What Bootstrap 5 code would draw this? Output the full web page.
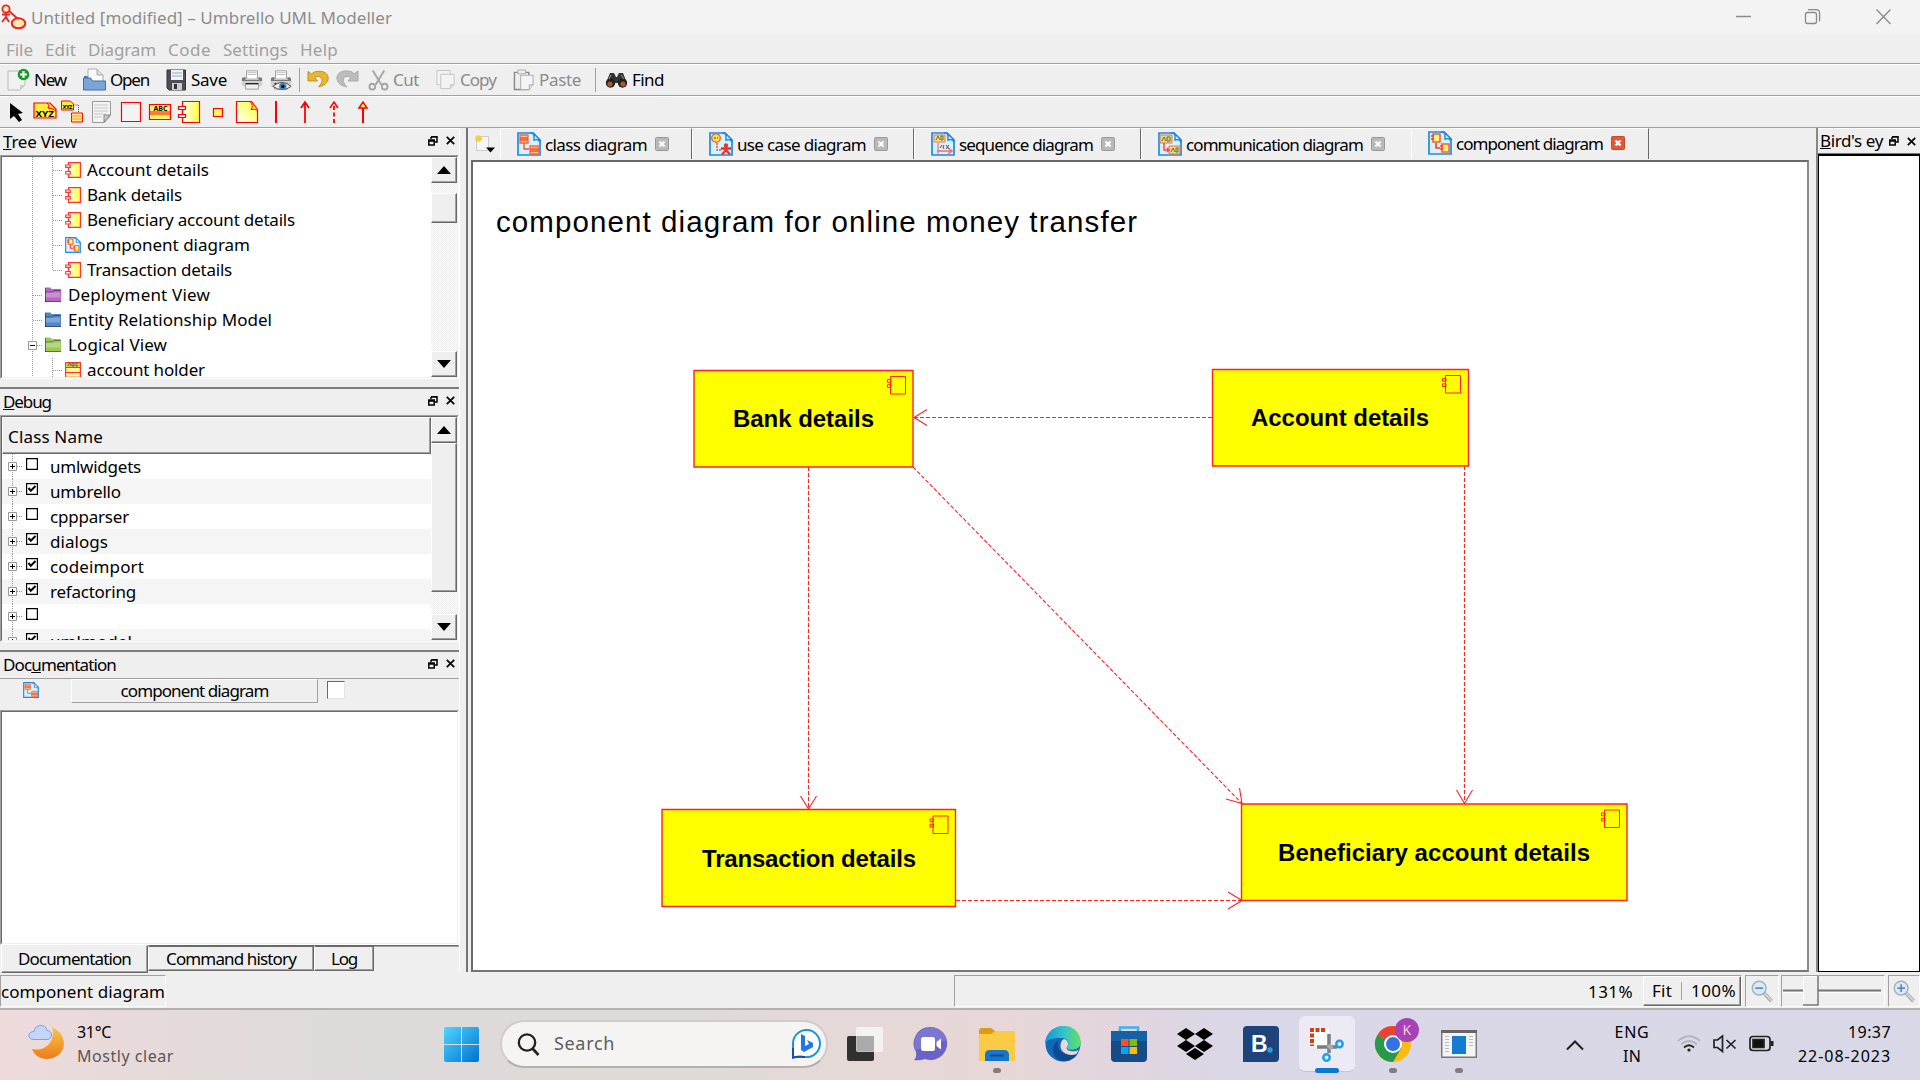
<!DOCTYPE html>
<html lang="en">
<head>
<meta charset="utf-8">
<title>Untitled [modified] – Umbrello UML Modeller</title>
<link href="https://cdn.jsdelivr.net/npm/bootstrap@5.3.0/dist/css/bootstrap.min.css" rel="stylesheet">
<style>
:root{--face:#efefef;--mid:#a0a0a0;--dark:#696969}
body{width:1920px;height:1080px;overflow:hidden;background:var(--face);color:#000;font:17px/24px "Noto Sans","Open Sans",sans-serif}
svg{display:block;flex:none}
.fit{display:inline-block;white-space:nowrap;flex:none}
.titlebar{height:34px;background:#f3f3f3;color:#8c8c8c}
.titlebar .fit{padding-top:1px}
.menus{height:30px;color:#a0a0a0;border-bottom:1px solid var(--mid);padding:2px 0 0 6px}
.menus .fit{margin-right:12px}
.tools{height:32px;border-top:1px solid #fff;border-bottom:1px solid var(--mid)}
.off{color:#8a8a8a}
.vline{width:1px;height:24px;background:var(--mid);flex:none}
.ml5{margin-left:5px}.ml7{margin-left:7px}.ml9{margin-left:9px}.ml14{margin-left:14px}.ml17{margin-left:17px}
.mr5{margin-right:5px}
.newicon{margin:0 4px 0 7px}
.shapes{padding-left:3px}
.shapes svg{margin-right:5px}
.shapes .wide{margin-right:2px}
.workarea{height:844px}
.leftdock{width:460px;border-right:1px solid #fff;border-top:1px solid #fff}
.splitter{width:6px}
.docktitle{height:26px;padding:0 4px 0 3px}
.docktitle .btns{margin-top:-2px}
.sunken{border:1px solid;border-color:var(--mid) #fff #fff var(--mid);width:459px}
.sunken>.inner{border:1px solid;border-color:var(--dark) #efefef #efefef var(--dark);background:#fff;height:100%;overflow:hidden}
.treebox{height:224px}
.treebox .labels{padding-top:1px}
.lvl1{padding-left:1px}.lvl2{margin-left:-18px}
.dockgap{height:10px;border-bottom:2px solid #7d7d7d}
.line25{height:25px;flex:none}
.sbar{width:26px;flex:none;background:repeating-conic-gradient(#fff 0 25%,#ececec 0 50%) 0 0/2px 2px}
.raised{background:var(--face);border:1px solid;border-color:#fff var(--dark) var(--dark) #fff;box-shadow:inset -1px -1px var(--mid);flex:none}
.sq{height:26px;display:flex;align-items:center;justify-content:center}
.thumb1{height:30px;margin-top:10px}
.thumb2{height:149px}
.debugbox{height:227px}
.colhead{height:37px;padding:2px 0 0 5px}
.odd{background:#f5f5f5}
.classname{padding-top:1px}
.docrow{height:32px;border-top:1px solid var(--mid)}
.docicon{margin:3px 0 0 23px}
.namebtn{width:247px;height:24px;border:1px solid;border-color:#fff var(--mid) var(--mid) #fff;margin-left:32px}
.tickbox{width:18px;height:18px;background:#fff;border:1px solid;border-color:var(--dark) #e3e3e3 #e3e3e3 var(--dark);margin:2px 0 0 9px}
.docbox{height:235px}
.doctabs{height:28px;padding-left:1px}
.doctabs .dt{border:1px solid;border-color:transparent var(--dark) var(--dark) #fff;box-shadow:inset -1px -1px var(--mid);display:flex;justify-content:center;align-items:center;flex:none}
.doctabs .one{width:147px;height:28px}
.doctabs .two{width:166px;height:26px;border-top:2px solid var(--dark)}
.doctabs .three{width:60px;height:26px;border-top:2px solid var(--dark)}
.doctabs .rest{flex:1;height:2px;background:var(--dark);border:0}
.center{width:1346px;border-left:2px solid #747474}
.tabstrip{height:32px}
.dtab{height:31px;border-left:1px solid #fff;border-top:1px solid #fff;border-right:1px solid var(--dark);flex:none;padding-left:16px;display:flex;align-items:center}
.dtab .fit{margin:1px 8px 0 4px}
.newtab{width:32px}
.t1{width:192px}.t2{width:222px}.t3{width:227px}.t4{width:270px;border-right:0}.t5{width:238px;padding-bottom:2px}
.frame{height:812px;width:1338px;border:2px solid;border-color:var(--dark) #8b8b8b #777 var(--dark);background:#fff;margin-left:3px}
.rightdock{width:104px;border-left:2px solid #888}
.birdtitle{height:26px;border-top:1px solid #fff;border-bottom:1px solid #777;padding-left:2px}
.birdbox{height:818px;background:#fff;border:1px solid #000;border-top:2px solid #000}
.statusbar{height:36px;padding-top:3px}
.cell{height:32px;border:1px solid;border-color:var(--mid) #fff #fff var(--mid);flex:none;display:flex;align-items:center}
.cell>.fit{padding-top:1px}
.zoomcell{width:788px}
.zoomset{width:98px;height:30px;margin-left:10px;padding-left:8px}
.mini{height:18px;margin:0 9px}
.mg{width:34px;margin-left:3px}.mglast{width:32px}.sl{width:104px;margin-left:2px}
.taskbar{height:72px;border-top:2px solid #b4b0b0;font-size:16px;background:linear-gradient(90deg,#efdada,#e4dada 10%,#dddada 20%,#dddad7 36%,#e4d9d8 42%,#e7d7d6 52%,#e2d5df 58%,#dad7e7 65%,#d8d8e6)}
.taskbar .fit{position:relative;top:-1px}
.soft{color:#5a5556}.search{font-size:18px;color:#5e5c5c}
.weather{width:367px}
.startlogo{margin-top:-1px}
.pill{width:328px;height:48px;border-radius:24px;background:#f5f4f3;border:2px solid #d2cbcb;border-bottom-color:#b5afae;margin:-2px 0 0 21px}
.apps{margin-left:4px}
.app{width:66px;height:70px;flex:none;position:relative;display:flex;align-items:center;justify-content:center;padding-bottom:2px}
.app.live::after{content:"";position:absolute;bottom:7px;width:8px;height:5px;border-radius:3px;background:#837b7e}
.app.focus::before{content:"";position:absolute;left:5px;top:6px;width:56px;height:56px;border-radius:6px;background:#eceaf5;border-bottom:1px solid #c5c3d0}
.app.focus::after{content:"";position:absolute;bottom:7px;width:24px;height:5px;border-radius:3px;background:#0a78d4}
.app svg{position:relative}
.chev{margin-left:74px}.lang{width:36px;margin-left:30px}.tray{margin-left:26px}.clock{width:93px;margin-left:22px}
</style>
<script src="https://cdn.jsdelivr.net/npm/bootstrap@5.3.0/dist/js/bootstrap.bundle.min.js"></script>
</head>
<body class="d-flex flex-column">
<svg width="0" height="0" class="position-absolute">
<defs>
<linearGradient id="gy" x1="0" y1="1" x2="1" y2="0"><stop offset="0" stop-color="#fff"/><stop offset="1" stop-color="#ff3"/></linearGradient>
<linearGradient id="gx"><stop offset="0" stop-color="#fffef0"/><stop offset="1" stop-color="#ffff3a"/></linearGradient>
<linearGradient id="win" x1="0" y1="0" x2="1" y2="1"><stop offset="0" stop-color="#4fd5ff"/><stop offset="1" stop-color="#0072d0"/></linearGradient>
<linearGradient id="moon" x1="0" y1="0" x2="0" y2="1"><stop offset="0" stop-color="#f5c84a"/><stop offset="1" stop-color="#ef7a1a"/></linearGradient>
<linearGradient id="edgeA"><stop offset="0" stop-color="#1296d8"/><stop offset=".55" stop-color="#35c5c7"/><stop offset="1" stop-color="#64e05a"/></linearGradient>
<symbol id="float" viewBox="0 0 10 10"><path d="M3 0.5h6v5.5H7M3 1v2M3 1h6M.8 4h5.4v5H.8zM.8 5h5.4" fill="none" stroke="#000" stroke-width="1.5"/></symbol>
<symbol id="shut" viewBox="0 0 9 9"><path d="M.8.8l7.4 7.4M8.2.8L.8 8.2" stroke="#000" stroke-width="1.7"/></symbol>
<symbol id="up" viewBox="0 0 14 8"><path d="M0 8L7 0l7 8z"/></symbol>
<symbol id="down" viewBox="0 0 14 8"><path d="M0 0h14L7 8z"/></symbol>
<symbol id="comp" viewBox="0 0 16 16"><path d="M3.500.600h12v14.800h-12z" fill="url(#gx)" stroke="#f33" stroke-width="1.200"/><path d="M.7 3h4.600v2.400H.7zM.7 9.500h4.600V12H.7zM3.500 5.500v4" fill="#fff" stroke="#f33" stroke-width="1.100"/></symbol>
<symbol id="page" viewBox="0 0 24 24"><path d="M1 1h15l7 7v15H1z" fill="#d9f1ff" stroke="#1b8ce8" stroke-width="1.700"/><path d="M13 1c5 0 4 3 4 7 3-1 5 0 6 2V8l-7-7z" fill="#fff" stroke="#1b8ce8" stroke-width="1.500"/></symbol>
<symbol id="pcomp" viewBox="0 0 24 24"><use href="#page"/><path d="M5 3h7v8H5zM14 13h7v8h-7z" fill="#fff47c" stroke="#fb5a2d" stroke-width="1.500"/><path d="M3 5h3M3 8h3M12 15h3M12 18h3M8 12v5h4" stroke="#fb3a2d" stroke-width="1.600" fill="none"/></symbol>
<symbol id="pclass" viewBox="0 0 24 24"><use href="#page"/><path d="M3 3h8v8H3zM13 14h9v8h-9z" fill="#ffc68b" stroke="#f46b3d" stroke-width="1.300"/><path d="M3 6h8M3 8h8M13 17h9M13 19h9M7 11v6h5" stroke="#f4502d" stroke-width="1.300" fill="none"/></symbol>
<symbol id="puse" viewBox="0 0 24 24"><use href="#page"/><circle cx="7" cy="6" r="4.300" fill="#ffe25a" stroke="#ee6a36" stroke-width="1.500"/><path d="M5 6h4M8 11v7h4" stroke="#c54" stroke-width="1.400" stroke-dasharray="2 1" fill="none"/><circle cx="17" cy="13.500" r="2.200" fill="#e33"/><path d="M12 16.500h10M17 14v4l-4 4.500M17 18l4 4.500" stroke="#ef2e2e" stroke-width="2.400" fill="none"/></symbol>
<symbol id="pseq" viewBox="0 0 24 24"><use href="#page"/><path d="M3 3h11v7H3z" fill="#eee37e" stroke="#f47146"/><path d="M5 8l2-4 2 4M10 4h2v4h-2z" stroke="#666a40" fill="none"/><path d="M7 11v11" stroke="#f55"/><path d="M6 19h15M17 16l4 3-4 3" stroke="#f66" stroke-width="1.500" fill="none"/><path d="M9 16l2-3M13 13q-2 2 0 4M15 13l3 4M18 13l-3 4" stroke="#555" fill="none"/></symbol>
<symbol id="pcom" viewBox="0 0 24 24"><use href="#page"/><path d="M2 3h12v8H2zM11 14h11v8H11z" fill="#e4da79" stroke="#f47146"/><path d="M4 9l2-4 2 4M9 5h3v4H9zM13 20l2-4 2 4M18 16h2v4h-2z" stroke="#6a6d45" fill="none"/><path d="M6 11v7h5M9 16l2 2-2 2" stroke="#f44" stroke-width="1.500" fill="none"/></symbol>
<symbol id="folder" viewBox="0 0 16 16"><path d="M0 15V.500h5.500l1 1.500H16v13z"/><path d="M.5 5h7l1.500-1.500h6.500M0 14.500h16M.5 15V1" stroke="#0006" fill="none"/><path d="M1 5.500h14v5H1z" fill="#fff4"/></symbol>
<symbol id="cls" viewBox="0 0 16 16"><path d="M.6.600h14.800v14.800H.6z" fill="#fff799" stroke="#f33" stroke-width="1.200"/><path d="M1 1h14v4H1z" fill="#d5ca43"/><path d="M0 5.500h16M0 10.500h16" stroke="#f33"/><path d="M3 4l1.500-3L6 4M7 1v3h2V1zM13 1h-2v3h2" stroke="#664" fill="none"/></symbol>
<symbol id="plus" viewBox="0 0 9 9"><path d="M.5.500h8v8h-8z" fill="#fff" stroke="#999"/><path d="M2 4.500h5M4.500 2v5" stroke="#000"/></symbol>
<symbol id="minus" viewBox="0 0 9 9"><path d="M.5.500h8v8h-8z" fill="#fff" stroke="#999"/><path d="M2 4.500h5" stroke="#000"/></symbol>
<symbol id="chk0" viewBox="0 0 12 12"><path d="M.6.600h10.800v10.800H.6z" fill="#fff" stroke="#000" stroke-width="1.200"/></symbol>
<symbol id="chk1" viewBox="0 0 12 12"><use href="#chk0"/><path d="M2.500 5l2.300 2.700L9.500 3" fill="none" stroke="#000" stroke-width="2"/></symbol>
<symbol id="xg" viewBox="0 0 14 14"><rect x=".5" y=".5" width="13" height="13" rx="1" fill="#b9b9b9" stroke="#999"/><path d="M4.500 4.500l5 5M9.500 4.500l-5 5" stroke="#fff" stroke-width="2.300"/></symbol>
<symbol id="xr" viewBox="0 0 14 14"><rect x=".5" y=".5" width="13" height="13" rx="1" fill="#e2583b" stroke="#c9492f"/><path d="M4.500 4.500l5 5M9.500 4.500l-5 5" stroke="#fff" stroke-width="2.300"/></symbol>
<symbol id="printer" viewBox="0 0 24 24"><path d="M6 2h12v9H6z" fill="#fff" stroke="#999"/><path d="M7 4h10M7 6h10" stroke="#bbb"/><path d="M1 11q0-2 2-2h2v3h14V9h2q2 0 2 2v4H1z" fill="#777"/><path d="M1 13h22v5q0 1-1 1H2q-1 0-1-1z" fill="#d0d0d0"/><path d="M5 16h14v6H5z" fill="#eee" stroke="#999"/><path d="M5 16h14" stroke="#222" stroke-width="1.500"/></symbol>
<symbol id="mag" viewBox="0 0 24 24"><path d="M13 13l8.500 9" stroke="#aaa" stroke-width="4"/><path d="M14 14l8 8" stroke="#d6d6d6" stroke-width="2"/><circle cx="8.500" cy="8.500" r="7.200" fill="#d7e9fb" stroke="#a9afb8" stroke-width="1.600"/><path d="M4.500 8.500h8" stroke="#5a86b8" stroke-width="1.700"/></symbol>
</defs></svg>

<header class="titlebar d-flex align-items-center">
 <svg width="27" height="34" viewBox="0 0 27 34"><g fill="#ffe9b0" stroke="#ee2222" stroke-width="1.800"><circle cx="6" cy="9" r="3.600"/><path d="M6 12.500v5M2 14.500h8M6 17l-4 5M6 17l3 5M9 11l9 8" fill="none"/><ellipse cx="18.500" cy="23.300" rx="6.800" ry="5" stroke-width="2"/></g></svg>
 <span class="fit ms-1" data-w="361">Untitled [modified] – Umbrello UML Modeller</span>
 <svg class="ms-auto" width="184" height="34" viewBox="1736 0 184 34" fill="none" stroke="#8a8a8a" stroke-width="1.300"><path d="M1736 16.500h15M1876.500 9.500l14 14.500M1890.500 9.500l-14 14.500"/><rect x="1805.500" y="12.500" width="11" height="11" rx="2"/><path d="M1808 9.700h8q3.600 0 3.600 3.600v8"/></svg>
</header>
<nav class="menus d-flex align-items-center">
 <span class="fit" data-w="27">File</span><span class="fit" data-w="31">Edit</span><span class="fit" data-w="68">Diagram</span><span class="fit" data-w="43">Code</span><span class="fit" data-w="65">Settings</span><span class="fit" data-w="38">Help</span>
</nav>
<div class="tools d-flex align-items-center">
 <svg class="newicon" width="23" height="24" viewBox="0 0 23 24"><path d="M1 3h17v14l-5 5H1z" fill="#f1f1f1" stroke="#b9b9b9"/><path d="M18 17h-5v5z" fill="#ccc"/><circle cx="16.500" cy="6.500" r="5.800" fill="#159a28"/><path d="M16.500 3v7M13 6.500h7" stroke="#fff" stroke-width="2.200"/></svg>
 <span class="fit" data-w="32">New</span>
 <svg class="ml17 me-1" width="23" height="24" viewBox="0 0 23 24"><path d="M1 11V8h8v3" fill="#4a7cb8"/><path d="M5 1h9l6 6v10H5z" fill="#fafafa" stroke="#aaa"/><path d="M14 1v6h6" fill="#ddd" stroke="#aaa"/><path d="M.5 22V10h7l2 3h13v9z" fill="#7ba4d8" stroke="#3c6fae"/></svg>
 <span class="fit" data-w="39">Open</span>
 <svg class="ml17 me-1" width="21" height="24" viewBox="0 0 21 24"><path d="M1 2h18.500v20H3l-2-2z" fill="#4d4d57" stroke="#333"/><path d="M5 2h12v10H5z" fill="#eef3fa"/><path d="M6 5h10M6 8h10" stroke="#9ab"/><path d="M6 15h10v7H6z" fill="#ccc"/><path d="M8 16h3v5H8z" fill="#333"/></svg>
 <span class="fit" data-w="36">Save</span>
 <svg class="ml14" width="22" height="24"><use href="#printer"/></svg>
 <svg class="ml7" width="22" height="24" viewBox="0 0 24 24"><use href="#printer"/><path d="M3 19q10-9 20 0-9 7-20 0z" fill="#eee" stroke="#444"/><circle cx="14" cy="19" r="4" fill="#3b84b5"/><circle cx="14" cy="19" r="1.700"/></svg>
 <span class="vline ml7"></span>
 <svg class="ml7" width="23" height="24" viewBox="0 0 24 24"><path d="M1 3v10h10L8 9.500c7-4 11 3 4 9.500 14-2 13-17 0-16-4 0-6 1-7 3z" fill="#eab62e" stroke="#c38f12"/></svg>
 <svg class="ml5" width="24" height="24" viewBox="0 0 24 24"><path d="M23 3v10H13l3-3.500c-7-4-11 3-4 9.500-14-2-13-17 0-16 4 0 6 1 7 3z" fill="#bcbcbc" stroke="#aaa"/></svg>
 <svg class="ml9 me-1" width="21" height="24" viewBox="0 0 22 24" fill="none" stroke="#a5a5a5"><path d="M5 2l9 15M17 2L8 17" stroke-width="2"/><circle cx="4.500" cy="19" r="3" stroke-width="2"/><circle cx="17.500" cy="19" r="3" stroke-width="2"/></svg>
 <span class="fit off" data-w="26">Cut</span>
 <svg class="ml17 me-1" width="20" height="24" viewBox="0 0 21 24" fill="#f3f3f3" stroke="#c3c3c3"><path d="M1 2h14v15H1z"/><path d="M5 6h14v11l-4 4H5z"/><path d="M19 17h-4v4" fill="#ddd"/></svg>
 <span class="fit off" data-w="36">Copy</span>
 <svg class="ml17 me-1" width="22" height="24" viewBox="0 0 23 24" fill="#eee" stroke="#aaa"><path d="M1.500 4h15v18h-15z" stroke="#888" stroke-width="1.500"/><path d="M5 1.500h8v4H5z"/><path d="M8 7h13v10l-4 5H8z" fill="#f4f4f4"/><path d="M21 17h-4v5" fill="#ddd"/></svg>
 <span class="fit off" data-w="42">Paste</span>
 <span class="vline ml14"></span>
 <svg class="ml9 me-1" width="23" height="24" viewBox="0 0 23 24"><path d="M5 5l4 0 2 4h1l2-4h4l4 10H1z" fill="#333"/><circle cx="5.500" cy="15" r="4.700" fill="#222"/><circle cx="17.500" cy="15" r="4.700" fill="#222"/><circle cx="5" cy="16" r="2.600" fill="#a65a2a"/><circle cx="18" cy="16" r="2.600" fill="#a65a2a"/><path d="M6 7l-2 4M16 7l3 4" stroke="#999"/></svg>
 <span class="fit" data-w="32">Find</span>
</div>
<div class="tools shapes d-flex align-items-center">
 <svg width="24" height="24" viewBox="4 0 24 24"><path d="M9 2v16l4-3 5 6 3-2-4-6 5-1z" transform="translate(2,1)"/></svg>
 <svg class="wide" width="26" height="24" viewBox="-1 0 26 24"><path d="M1 3h16l6 6v9H1z" fill="#ffef3b" stroke="#f00" stroke-width="1.200"/><path d="M14 3q3 2 1 5 5 0 8 3" fill="#ffef3b" stroke="#f00"/><text x="2.500" y="17" font-size="9" font-weight="700" textLength="18.500" lengthAdjust="spacingAndGlyphs">XYZ</text></svg>
 <svg width="25" height="24" viewBox="0 0 24 24"><path d="M1 1h9l3 3v6H1z" fill="#ffef3b" stroke="#f00"/><text x="2" y="9" font-size="6" font-weight="700" textLength="10">XYZ</text><path d="M14 5h4v7" stroke="#f00" stroke-dasharray="1 1" fill="none"/><path d="M11 13h11v9H11z" fill="#fff27a" stroke="#f00"/><path d="M11 16h11M11 19h11" stroke="#f85"/></svg>
 <svg width="24" height="24" viewBox="0 0 24 24"><path d="M2.500 1.500h18v14l-6 7h-12z" fill="#f3f3f3" stroke="#999"/><path d="M4 5h14M4 8h14M4 11h14M4 14h12M4 17h8" stroke="#bbb" stroke-width=".8"/><path d="M20 15h-6v7z" fill="#ccc" stroke="#888"/></svg>
 <svg width="24" height="24"><path d="M2.500 2.500h19v19h-19z" fill="#f3f3f3" stroke="#f00" stroke-width="1.200"/></svg>
 <svg width="24" height="24"><path d="M1.500 4.500h21v15h-21z" fill="#fff56b" stroke="#f00" stroke-width="1.200"/><path d="M1.500 12h21M1.500 14h21" stroke="#f00"/><text x="5.500" y="11" font-size="7" font-weight="700" textLength="14" lengthAdjust="spacingAndGlyphs">ABC</text></svg>
 <svg width="24" height="24"><path d="M5.500 1.500h17v21h-17z" fill="url(#gx)" stroke="#f00" stroke-width="1.200"/><path d="M1.500 6.500h7v3h-7zM1.500 14.500h7v3h-7zM5.500 9v5" fill="#fff" stroke="#f00" stroke-width="1.200"/></svg>
 <svg width="24" height="24"><path d="M7.500 8.500h9v8h-9z" fill="#ff5" stroke="#f00" stroke-width="1.200"/></svg>
 <svg width="24" height="24"><path d="M1.500 1.500h15l6 8v13h-21z" fill="url(#gy)" stroke="#f00" stroke-width="1.200"/><path d="M15 1.500q4 4 1 8 4-1 7 1" fill="#ffef3b" stroke="#f00"/></svg>
 <svg width="24" height="24"><path d="M12 1v22" stroke="#f00" stroke-width="2"/></svg>
 <svg width="24" height="24"><path d="M12 2v21M8 8l4-6 4 6" stroke="#f00" stroke-width="1.800" fill="none"/></svg>
 <svg width="24" height="24"><path d="M12 23V3" stroke="#f00" stroke-width="1.800" stroke-dasharray="4 2.500"/><path d="M8 8l4-6 4 6" stroke="#f00" stroke-width="1.500" fill="none"/></svg>
 <svg width="24" height="24"><path d="M12 23V8" stroke="#f00" stroke-width="2"/><path d="M8 8l4-6 4 6z" stroke="#f00" stroke-width="1.500" fill="#ff5"/></svg>
</div>

<main class="workarea d-flex">
 <aside class="leftdock flex-shrink-0">
  <div class="docktitle d-flex align-items-center justify-content-between"><span class="fit" data-w="74"><u>T</u>ree View</span><span class="btns d-flex gap-2"><svg width="10" height="10"><use href="#float"/></svg><svg width="9" height="9"><use href="#shut"/></svg></span></div>
  <div class="sunken treebox"><div class="inner d-flex">
   <svg width="84" height="220" viewBox="2 156 84 220"><g stroke="#999" stroke-dasharray="1 1" fill="none"><path d="M32.500 156v221M52.500 156v113M53 169.500h9M53 194.500h9M53 219.500h9M53 244.500h9M53 269.500h9M33 294.500h9M33 319.500h9M33 344.500h9M52.500 357v20M53 369.500h9"/></g>
    <g><use href="#comp" x="65" y="161" width="16" height="16"/><use href="#comp" x="65" y="186" width="16" height="16"/><use href="#comp" x="65" y="211" width="16" height="16"/><use href="#pcomp" x="65" y="236" width="16" height="16"/><use href="#comp" x="65" y="261" width="16" height="16"/><use href="#folder" x="45" y="286" width="16" height="16" fill="#b768c4"/><use href="#folder" x="45" y="311" width="16" height="16" fill="#4f87c8"/><use href="#folder" x="45" y="336" width="16" height="16" fill="#9bc957"/><use href="#minus" x="28" y="340" width="9" height="9"/><use href="#cls" x="65" y="361" width="16" height="16"/></g></svg>
   <div class="flex-grow-1 labels">
    <div class="line25 lvl1"><span class="fit" data-w="122">Account details</span></div>
    <div class="line25 lvl1"><span class="fit" data-w="95">Bank details</span></div>
    <div class="line25 lvl1"><span class="fit" data-w="208">Beneficiary account details</span></div>
    <div class="line25 lvl1"><span class="fit" data-w="163">component diagram</span></div>
    <div class="line25 lvl1"><span class="fit" data-w="145">Transaction details</span></div>
    <div class="line25 lvl2"><span class="fit" data-w="142">Deployment View</span></div>
    <div class="line25 lvl2"><span class="fit" data-w="204">Entity Relationship Model</span></div>
    <div class="line25 lvl2"><span class="fit" data-w="99">Logical View</span></div>
    <div class="lvl1"><span class="fit" data-w="118">account holder</span></div>
   </div>
   <div class="sbar d-flex flex-column"><div class="raised sq"><svg width="14" height="8"><use href="#up"/></svg></div><div class="raised thumb1"></div><div class="raised sq mt-auto"><svg width="14" height="8"><use href="#down"/></svg></div></div>
  </div></div>
  <div class="dockgap"></div>
  <div class="docktitle d-flex align-items-center justify-content-between"><span class="fit" data-w="48"><u>D</u>ebug</span><span class="btns d-flex gap-2"><svg width="10" height="10"><use href="#float"/></svg><svg width="9" height="9"><use href="#shut"/></svg></span></div>
  <div class="sunken debugbox"><div class="inner d-flex">
   <div class="flex-grow-1" id="debuglist">
    <div class="raised colhead d-flex align-items-center"><span class="fit" data-w="95">Class Name</span></div>
   </div>
   <div class="sbar d-flex flex-column"><div class="raised sq"><svg width="14" height="8"><use href="#up"/></svg></div><div class="raised thumb2"></div><div class="raised sq mt-auto"><svg width="14" height="8"><use href="#down"/></svg></div></div>
  </div></div>
  <div class="dockgap"></div>
  <div class="docktitle d-flex align-items-center justify-content-between"><span class="fit" data-w="113">Doc<u>u</u>mentation</span><span class="btns d-flex gap-2"><svg width="10" height="10"><use href="#float"/></svg><svg width="9" height="9"><use href="#shut"/></svg></span></div>
  <div class="docrow d-flex"><svg class="docicon" width="16" height="16"><use href="#pclass"/></svg><div class="namebtn d-flex align-items-center justify-content-center"><span class="fit" data-w="148">component diagram</span></div><div class="tickbox"></div></div>
  <div class="sunken docbox"><div class="inner"></div></div>
  <div class="doctabs d-flex"><div class="dt one"><span class="fit" data-w="113">Documentation</span></div><div class="dt two"><span class="fit" data-w="130">Command history</span></div><div class="dt three"><span class="fit" data-w="26">Log</span></div><div class="dt rest"></div></div>
 </aside>
 <div class="splitter flex-shrink-0"></div>
 <section class="center flex-shrink-0">
  <div class="tabstrip d-flex">
   <svg class="newtab" width="32" height="31" viewBox="0 0 32 31"><path d="M8.500 8.500h12v14h-12z" fill="#f6f6f6" stroke="#ccc"/><circle cx="10.500" cy="10.500" r="3.300" fill="#f3cf45"/><path d="M18 19.500h9l-4.500 5z"/></svg>
   <div class="dtab t1"><svg width="24" height="24"><use href="#pclass"/></svg><span class="fit" data-w="102">class diagram</span><svg width="14" height="14"><use href="#xg"/></svg></div>
   <div class="dtab t2"><svg width="24" height="24"><use href="#puse"/></svg><span class="fit" data-w="129">use case diagram</span><svg width="14" height="14"><use href="#xg"/></svg></div>
   <div class="dtab t3"><svg width="24" height="24"><use href="#pseq"/></svg><span class="fit" data-w="134">sequence diagram</span><svg width="14" height="14"><use href="#xg"/></svg></div>
   <div class="dtab t4"><svg width="24" height="24"><use href="#pcom"/></svg><span class="fit" data-w="177">communication diagram</span><svg width="14" height="14"><use href="#xg"/></svg></div>
   <div class="dtab t5"><svg width="24" height="24"><use href="#pcomp"/></svg><span class="fit" data-w="147">component diagram</span><svg width="14" height="14"><use href="#xr"/></svg></div>
  </div>
  <div class="frame">
   <svg width="1334" height="806" viewBox="473 162 1334 806" font-family="Liberation Sans, sans-serif">
    <text x="496" y="231.500" font-size="29.500" textLength="641">component diagram for online money transfer</text>
    <g fill="#ff0" stroke="#f22" stroke-width="1.400">
     <path d="M694 370.500h219v96.500h-219zM1212.500 369.500h256v96.500h-256zM662 809.500h293.500v97H662zM1241.500 804h385.500v96.500h-385.500z"/>
     <path id="badge" d="M890.500 376.500h15v17.500h-15zM887.500 379.500h3.500v2.700h-3.500zM887.500 384.800h3.500v2.700h-3.500z" stroke-width="1"/>
     <use href="#badge" x="555" y="-1"/><use href="#badge" x="42.500" y="439.500"/><use href="#badge" x="714" y="433.500"/>
    </g>
    <g stroke="#f22" fill="none" stroke-width="1.100">
     <path stroke-dasharray="4 2" d="M1212 417.500H914M808.500 467v342M913 467l329 336.500M1464.500 466v337.500M956 900.500h285"/>
     <path d="M927 409.500l-13 8 13 8M800.500 796l8 13 8-13M1239.500 788l2.500 15.500-16-4.500M1456.500 790l8 13.500 8-13.500M1228 892l14 8.500-14 8.500"/>
    </g>
    <g font-size="24" font-weight="700">
     <text x="733" y="427" textLength="141">Bank details</text><text x="1251" y="426" textLength="178">Account details</text><text x="702" y="867" textLength="214">Transaction details</text><text x="1278" y="861" textLength="312">Beneficiary account details</text>
    </g>
   </svg>
  </div>
 </section>
 <div class="splitter flex-shrink-1"></div>
 <aside class="rightdock flex-shrink-0">
  <div class="birdtitle d-flex align-items-center"><span class="fit" data-w="63"><u>B</u>ird's ey</span><svg class="ms-auto" width="10" height="10"><use href="#float"/></svg><svg class="ms-2 me-1" width="9" height="9"><use href="#shut"/></svg></div>
  <div class="birdbox"></div>
 </aside>
</main>

<footer class="statusbar d-flex">
 <div class="cell ps-0"><span class="fit" data-w="164">component diagram</span></div>
 <div class="cell ms-auto justify-content-end zoomcell"><span class="fit" data-w="45">131%</span>
  <div class="raised zoomset d-flex align-items-center"><span class="fit" data-w="20">Fit</span><span class="vline mini"></span><span class="fit" data-w="45">100%</span></div></div>
 <div class="cell mg justify-content-center"><svg width="23" height="23"><use href="#mag"/></svg></div>
 <div class="cell sl"><svg width="101" height="30" viewBox="0 0 101 30"><path d="M1 14.500h98" stroke="#777" stroke-width="2"/><path d="M1 16.500h98" stroke="#fff"/><path d="M21 0h15v29H21z" fill="#efefef"/><path d="M21.500 29V.500H35" stroke="#fff" fill="none"/><path d="M36 0v29H21" stroke="#777" stroke-width="1.500" fill="none"/></svg></div>
 <div class="cell mg mglast justify-content-center"><svg width="23" height="23" viewBox="0 0 24 24"><use href="#mag"/><path d="M8.500 4.500v8" stroke="#5a86b8" stroke-width="1.700"/></svg></div>
</footer>

<div class="taskbar d-flex align-items-center">
 <svg width="77" height="70" viewBox="0 1010 77 70"><path d="M52 1027c18 8 15 31-5 32-7 0-13-4-15-10 14 3 24-8 20-22z" fill="url(#moon)"/><path d="M34 1039.500c-7 0-7-8 0-8 1-8 12-8 13-1 6 0 6 9 0 9z" fill="#c3d5f8" stroke="#7d9fe8"/></svg>
 <div class="weather"><div><span class="fit" data-w="34">31°C</span></div><div><span class="fit soft" data-w="97">Mostly clear</span></div></div>
 <svg class="startlogo" width="35" height="35" viewBox="0 0 35 35"><path fill="url(#win)" d="M2 0h15v17H0V2Q0 0 2 0zM18 0h15q2 0 2 2v15H18zM0 18h17v17H2q-2 0-2-2zM18 18h17v15q0 2-2 2H18z"/></svg>
 <div class="pill d-flex align-items-center"><svg width="52" height="30" viewBox="0 0 52 30"><circle cx="25" cy="13.500" r="8.200" fill="none" stroke="#222" stroke-width="2.300"/><path d="M30.500 19.500l6 6.500" stroke="#222" stroke-width="2.700"/></svg><span class="fit search" data-w="61">Search</span>
 <svg class="ms-auto me-1" width="32" height="32" viewBox="0 0 32 32"><path d="M3 29.500V15A13.500 13.500 0 1 1 16 29c-5 0-8-1-13 .5z" fill="#fff" stroke="#1596e0" stroke-width="2"/><path d="M3 20v9.500c5-1.500 7-.5 12-.5" fill="none" stroke="#1b49b8" stroke-width="2"/><path d="M11 6l4 2v10l4-2-2-4 6 3v4l-9 5-3-2z" fill="#2277e8"/></svg></div>
 <div class="apps d-flex">
  <div class="app"><svg width="36" height="36"><rect x="0" y="10" width="27" height="25" rx="2" fill="#30302f"/><rect x="9" y="1" width="27" height="25" rx="2" fill="#f8f6f5" opacity=".85"/><path d="M9.500 10H27v15.500H11q-1.500 0-1.500-2z" fill="#999" opacity=".7"/></svg></div>
  <div class="app"><svg width="36" height="36"><path d="M18 1a16.500 16.500 0 1 1-6 32q-5 2-11 1 3-3 2-8A16.500 16.500 0 0 1 18 1z" fill="#6a62c4"/><path d="M18 1a16.500 16.500 0 0 1 16 13L2 24Q-2 5 18 1z" fill="#8a84d8" opacity=".6"/><rect x="8" y="11" width="14" height="14" rx="2.500" fill="#fff"/><path d="M23.500 16l4.500-3.500v11L23.500 20z" fill="#fff"/></svg></div>
  <div class="app live"><svg width="36" height="36"><path d="M0 5q0-3 3-3h9l4 3h19v10H0z" fill="#dd9a12"/><path d="M0 8h12l4-3h20v30H0z" fill="#fbcb45"/><path d="M6 35v-6q0-5 5-5h14q5 0 5 5v6z" fill="#1577cc"/><path d="M11 29.500h14" stroke="#0c4c91" stroke-width="2"/></svg></div>
  <div class="app"><svg width="36" height="36"><circle cx="18" cy="18" r="17.500" fill="#1167b8"/><path d="M0 18C1-6 36-6 35.800 17c0 6-10 9-14 5 4-5 0-11-7-10C8 12 1 14 0 18z" fill="url(#edgeA)"/><path d="M14 14c-4 8 2 18 19 13-3 6-10 9-16 8C5 32 6 18 14 14z" fill="#0d4a92"/><path d="M19 13c5 2 5 6 2.500 9 1 4 8 4 12 2l-2 4c-7 3-16-1-16-8 0-3 1-6 3.500-7z" fill="#e8d8d8"/></svg></div>
  <div class="app"><svg width="36" height="36"><path d="M9 8V1.500h18V8" fill="none" stroke="#35b5ee" stroke-width="2.500"/><path d="M0 5h36v27q0 4-4 4H4q-4 0-4-4z" fill="#164b86"/><path d="M0 5h36v10H0z" fill="#1769b4" opacity=".7"/><path d="M10 13h7.500v7H10z" fill="#f35325"/><path d="M18.500 13H26v7h-7.500z" fill="#81bc06"/><path d="M10 21h7.500v7H10z" fill="#05a6f0"/><path d="M18.500 21H26v7h-7.500z" fill="#ffba08"/></svg></div>
  <div class="app"><svg width="36" height="32" viewBox="0 0 36 32"><path d="M9 0l9 6-9 6-9-6zM27 0l9 6-9 6-9-6zM9 12l9 6-9 6-9-6zM27 12l9 6-9 6-9-6zM18 20l9 6-9 6-9-6z"/></svg></div>
  <div class="app"><svg width="36" height="36"><path d="M4 0h28q4 0 4 4v28q0 4-4 4H0V4q0-4 4-4z" fill="#1e437a"/><text x="8" y="26" font-family="Liberation Sans" font-size="23" font-weight="700" fill="#fff">B</text><circle cx="27" cy="24" r="2.700" fill="#16a8e8"/></svg></div>
  <div class="app focus"><svg width="36" height="36"><path d="M2 3h18v18H2z" fill="#fff"/><path d="M16 4H3v16" fill="none" stroke="#d13f13" stroke-width="4" stroke-dasharray="4 1.500"/><path d="M20 8v19M8 21h20" stroke="#777e86" stroke-width="3.500"/><path d="M19 19l4 4" stroke="#aaa" stroke-width="4"/><circle cx="30.500" cy="18" r="3.200" fill="none" stroke="#1da1e6" stroke-width="2.500"/><circle cx="17.500" cy="31.500" r="3.200" fill="none" stroke="#1da1e6" stroke-width="2.500"/></svg></div>
  <div class="app live"><svg width="54" height="54" viewBox="-9 -9 54 54"><circle cx="18" cy="18" r="18" fill="#fbbc12"/><path d="M18 18L2.400 9A18 18 0 0 1 33.600 9z" fill="#ea4335"/><path d="M2.400 9A18 18 0 0 0 18 36l8-13.500-8-4.500z" fill="#27994a"/><circle cx="18" cy="18" r="9" fill="#fff"/><circle cx="18" cy="18" r="7" fill="#3072e8"/><circle cx="32" cy="4" r="12" fill="#a841b5"/><text x="27.500" y="9" font-size="14" fill="#ecd" font-family="Noto Sans">K</text></svg></div>
  <div class="app live"><svg width="36" height="36"><path d="M.7 4.700h34.600v26.500H.7z" fill="#f4f4f4" stroke="#777" stroke-width="1.500"/><path d="M0 5.500h36" stroke="#666" stroke-width="3"/><path d="M11 10h14v18H11z" fill="#127bd2"/><path d="M4 10.500h4M4 13.500h4M4 16.500h4M4 19.500h4M4 22.500h4M4 25.500h4M28 10.500h4M28 13.500h4M28 16.500h4M28 19.500h4" stroke="#bbb"/></svg></div>
 </div>
 <svg class="chev" width="18" height="12" viewBox="0 0 18 12"><path d="M1 10.500l8-8 8 8" fill="none" stroke="#222" stroke-width="2"/></svg>
 <div class="lang text-center"><div><span class="fit" data-w="35">ENG</span></div><div><span class="fit" data-w="18">IN</span></div></div>
 <svg class="tray" width="100" height="24" viewBox="1676 1033 100 24" fill="none" stroke="#222" stroke-width="1.700"><path d="M1678 1041q11-9.500 22 0M1681 1044.500q8-7 16 0" stroke="#b5b4c2"/><path d="M1684 1047.500q5-4.500 10 0"/><circle cx="1689" cy="1050" r="1.600" fill="#222" stroke="none"/><path d="M1714 1040h3.500l5-4v15.500l-5-4h-3.500zM1726.500 1040l9 8.500M1735.500 1040l-9 8.500"/><rect x="1750" y="1036.500" width="20" height="14" rx="3"/><path d="M1753 1039.500h11v8h-11z" fill="#111"/><path d="M1772 1041v5" stroke-width="3"/></svg>
 <div class="clock text-end"><div><span class="fit" data-w="43">19:37</span></div><div><span class="fit" data-w="93">22-08-2023</span></div></div>
</div>

<script>
// Debug class list: name, enabled flag, label width
const classes=[["umlwidgets",0,91],["umbrello",1,71],["cppparser",0,79],["dialogs",1,58],["codeimport",1,94],["refactoring",1,86],["",0,0],["umlmodel",1,82]];
const list=document.getElementById("debuglist");
classes.forEach(([n,on,w],i)=>list.insertAdjacentHTML("beforeend",
`<div class="line25 d-flex ${i%2?"odd":""}"><svg width="48" height="25"><path d="M10.500 0v25M15 12.500h6" stroke="#999" stroke-dasharray="1 1"/><use href="#plus" x="6" y="8" width="9" height="9"/><use href="#chk${on}" x="24" y="4" width="12" height="12"/></svg><span class="fit classname" ${w?`data-w="${w}"`:""}>${n}</span></div>`));
document.querySelectorAll("[data-w]").forEach(e=>{
  const n=e.textContent.length,w=e.getBoundingClientRect().width;
  e.style.letterSpacing=((e.dataset.w-w)/n).toFixed(3)+"px";
});
</script>
</body>
</html>
